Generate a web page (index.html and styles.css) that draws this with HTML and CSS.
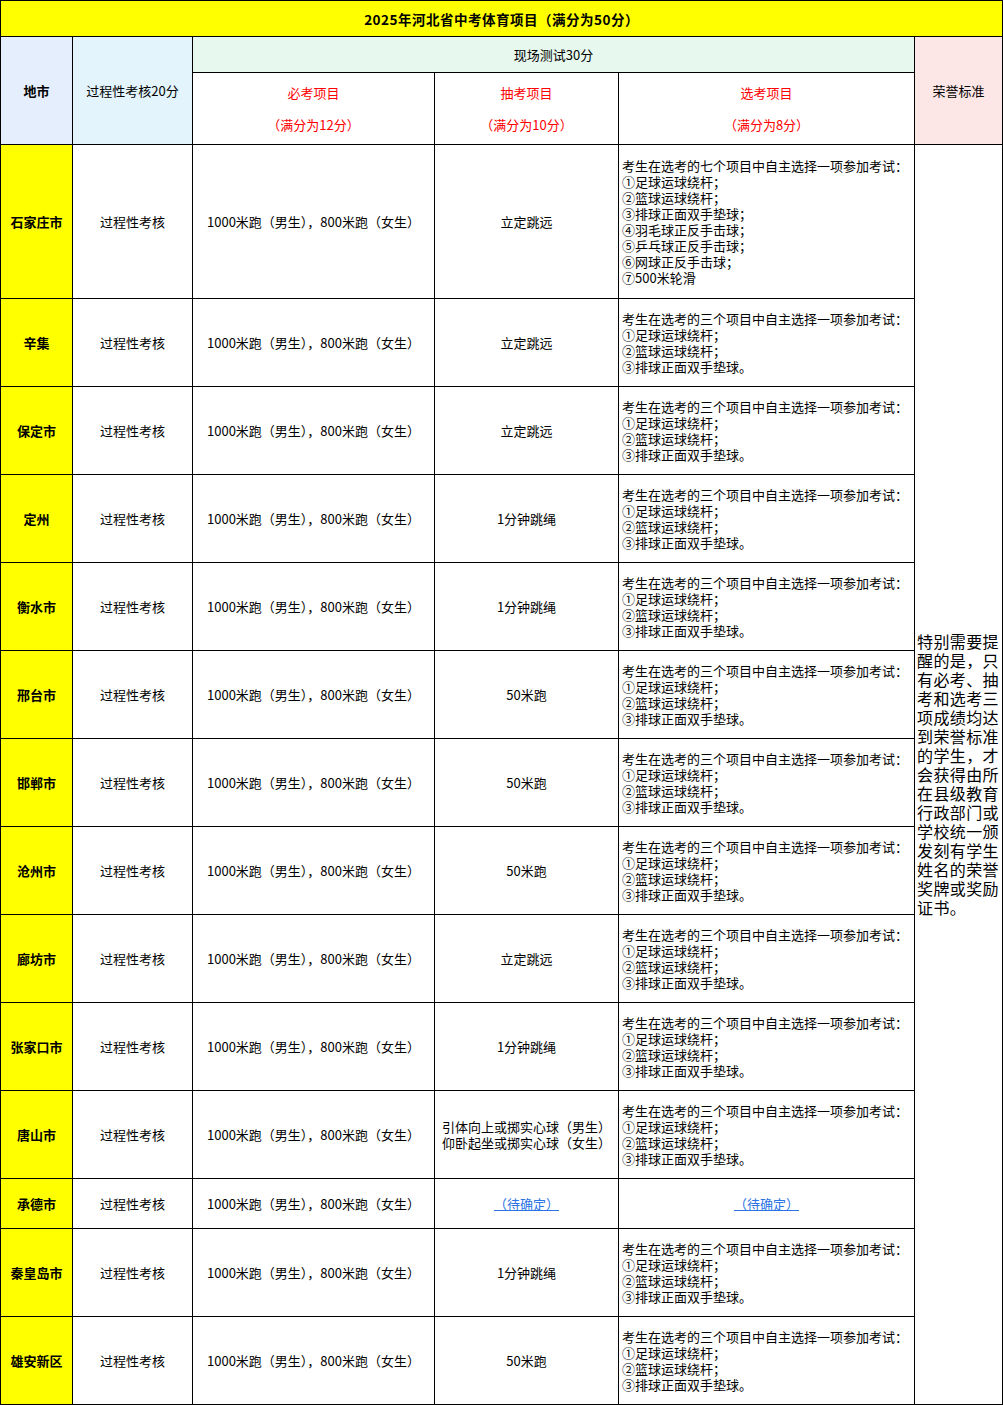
FILE: index.html
```html
<!DOCTYPE html>
<html lang="zh-CN">
<head>
<meta charset="utf-8">
<title>2025年河北省中考体育项目</title>
<link rel="stylesheet" href="styles.css">
</head>
<body>
<table class="sheet">
  <colgroup>
    <col class="c-city"><col class="c-proc"><col class="c-must"><col class="c-draw"><col class="c-opt"><col class="c-honor">
  </colgroup>
  <tr class="r-title">
    <td colspan="6" class="title">2025年河北省中考体育项目（满分为50分）</td>
  </tr>
  <tr class="r-h1">
    <td rowspan="2" class="h-city">地市</td>
    <td rowspan="2" class="h-proc">过程性考核20分</td>
    <td colspan="3" class="h-field">现场测试30分</td>
    <td rowspan="2" class="h-honor">荣誉标准</td>
  </tr>
  <tr class="r-h2">
    <td class="h-red"><div class="ln">必考项目</div><div class="ln gap">（满分为12分）</div></td>
    <td class="h-red"><div class="ln">抽考项目</div><div class="ln gap">（满分为10分）</div></td>
    <td class="h-red"><div class="ln">选考项目</div><div class="ln gap">（满分为8分）</div></td>
  </tr>
  <tr class="r-big">
    <td class="city">石家庄市</td>
    <td>过程性考核</td>
    <td>1000米跑（男生），800米跑（女生）</td>
    <td>立定跳远</td>
    <td class="opt">
      <div class="ln">考生在选考的七个项目中自主选择一项参加考试：</div>
      <div class="ln">①足球运球绕杆；</div>
      <div class="ln">②篮球运球绕杆；</div>
      <div class="ln">③排球正面双手垫球；</div>
      <div class="ln">④羽毛球正反手击球；</div>
      <div class="ln">⑤乒乓球正反手击球；</div>
      <div class="ln">⑥网球正反手击球；</div>
      <div class="ln">⑦500米轮滑</div>
    </td>
    <td rowspan="14" class="honor">特别需要提醒的是，只有必考、抽考和选考三项成绩均达到荣誉标准的学生，才会获得由所在县级教育行政部门或学校统一颁发刻有学生姓名的荣誉奖牌或奖励证书。</td>
  </tr>
  <tr class="r-std">
    <td class="city">辛集</td>
    <td>过程性考核</td>
    <td>1000米跑（男生），800米跑（女生）</td>
    <td>立定跳远</td>
    <td class="opt"><div class="ln">考生在选考的三个项目中自主选择一项参加考试：</div><div class="ln">①足球运球绕杆；</div><div class="ln">②篮球运球绕杆；</div><div class="ln">③排球正面双手垫球。</div></td>
  </tr>
  <tr class="r-std">
    <td class="city">保定市</td>
    <td>过程性考核</td>
    <td>1000米跑（男生），800米跑（女生）</td>
    <td>立定跳远</td>
    <td class="opt"><div class="ln">考生在选考的三个项目中自主选择一项参加考试：</div><div class="ln">①足球运球绕杆；</div><div class="ln">②篮球运球绕杆；</div><div class="ln">③排球正面双手垫球。</div></td>
  </tr>
  <tr class="r-std">
    <td class="city">定州</td>
    <td>过程性考核</td>
    <td>1000米跑（男生），800米跑（女生）</td>
    <td>1分钟跳绳</td>
    <td class="opt"><div class="ln">考生在选考的三个项目中自主选择一项参加考试：</div><div class="ln">①足球运球绕杆；</div><div class="ln">②篮球运球绕杆；</div><div class="ln">③排球正面双手垫球。</div></td>
  </tr>
  <tr class="r-std">
    <td class="city">衡水市</td>
    <td>过程性考核</td>
    <td>1000米跑（男生），800米跑（女生）</td>
    <td>1分钟跳绳</td>
    <td class="opt"><div class="ln">考生在选考的三个项目中自主选择一项参加考试：</div><div class="ln">①足球运球绕杆；</div><div class="ln">②篮球运球绕杆；</div><div class="ln">③排球正面双手垫球。</div></td>
  </tr>
  <tr class="r-std">
    <td class="city">邢台市</td>
    <td>过程性考核</td>
    <td>1000米跑（男生），800米跑（女生）</td>
    <td>50米跑</td>
    <td class="opt"><div class="ln">考生在选考的三个项目中自主选择一项参加考试：</div><div class="ln">①足球运球绕杆；</div><div class="ln">②篮球运球绕杆；</div><div class="ln">③排球正面双手垫球。</div></td>
  </tr>
  <tr class="r-std">
    <td class="city">邯郸市</td>
    <td>过程性考核</td>
    <td>1000米跑（男生），800米跑（女生）</td>
    <td>50米跑</td>
    <td class="opt"><div class="ln">考生在选考的三个项目中自主选择一项参加考试：</div><div class="ln">①足球运球绕杆；</div><div class="ln">②篮球运球绕杆；</div><div class="ln">③排球正面双手垫球。</div></td>
  </tr>
  <tr class="r-std">
    <td class="city">沧州市</td>
    <td>过程性考核</td>
    <td>1000米跑（男生），800米跑（女生）</td>
    <td>50米跑</td>
    <td class="opt"><div class="ln">考生在选考的三个项目中自主选择一项参加考试：</div><div class="ln">①足球运球绕杆；</div><div class="ln">②篮球运球绕杆；</div><div class="ln">③排球正面双手垫球。</div></td>
  </tr>
  <tr class="r-std">
    <td class="city">廊坊市</td>
    <td>过程性考核</td>
    <td>1000米跑（男生），800米跑（女生）</td>
    <td>立定跳远</td>
    <td class="opt"><div class="ln">考生在选考的三个项目中自主选择一项参加考试：</div><div class="ln">①足球运球绕杆；</div><div class="ln">②篮球运球绕杆；</div><div class="ln">③排球正面双手垫球。</div></td>
  </tr>
  <tr class="r-std">
    <td class="city">张家口市</td>
    <td>过程性考核</td>
    <td>1000米跑（男生），800米跑（女生）</td>
    <td>1分钟跳绳</td>
    <td class="opt"><div class="ln">考生在选考的三个项目中自主选择一项参加考试：</div><div class="ln">①足球运球绕杆；</div><div class="ln">②篮球运球绕杆；</div><div class="ln">③排球正面双手垫球。</div></td>
  </tr>
  <tr class="r-std">
    <td class="city">唐山市</td>
    <td>过程性考核</td>
    <td>1000米跑（男生），800米跑（女生）</td>
    <td><div class="ln">引体向上或掷实心球（男生）</div><div class="ln">仰卧起坐或掷实心球（女生）</div></td>
    <td class="opt"><div class="ln">考生在选考的三个项目中自主选择一项参加考试：</div><div class="ln">①足球运球绕杆；</div><div class="ln">②篮球运球绕杆；</div><div class="ln">③排球正面双手垫球。</div></td>
  </tr>
  <tr class="r-small">
    <td class="city">承德市</td>
    <td>过程性考核</td>
    <td>1000米跑（男生），800米跑（女生）</td>
    <td><a class="tbd" href="#">（待确定）</a></td>
    <td><a class="tbd" href="#">（待确定）</a></td>
  </tr>
  <tr class="r-std">
    <td class="city">秦皇岛市</td>
    <td>过程性考核</td>
    <td>1000米跑（男生），800米跑（女生）</td>
    <td>1分钟跳绳</td>
    <td class="opt"><div class="ln">考生在选考的三个项目中自主选择一项参加考试：</div><div class="ln">①足球运球绕杆；</div><div class="ln">②篮球运球绕杆；</div><div class="ln">③排球正面双手垫球。</div></td>
  </tr>
  <tr class="r-std">
    <td class="city">雄安新区</td>
    <td>过程性考核</td>
    <td>1000米跑（男生），800米跑（女生）</td>
    <td>50米跑</td>
    <td class="opt"><div class="ln">考生在选考的三个项目中自主选择一项参加考试：</div><div class="ln">①足球运球绕杆；</div><div class="ln">②篮球运球绕杆；</div><div class="ln">③排球正面双手垫球。</div></td>
  </tr>
</table>
</body>
</html>
```
FILE: styles.css
```css
html, body {
  margin: 0;
  padding: 0;
  background: #ffffff;
}
body {
  font-family: "Noto Sans CJK SC", "Noto Sans", sans-serif;
  font-size: 13px;
  color: #000;
}
.sheet {
  border-collapse: collapse;
  table-layout: fixed;
  width: 1002px;
}
.sheet td {
  border: 1px solid #000;
  padding: 0;
  text-align: center;
  vertical-align: middle;
  line-height: 16px;
  white-space: nowrap;
  overflow: hidden;
}
.ln {
  height: 16px;
  line-height: 16px;
  white-space: nowrap;
}
.ln.gap {
  margin-top: 16px;
}
.c-city { width: 72px; }
.c-proc { width: 120px; }
.c-must { width: 242px; }
.c-draw { width: 184px; }
.c-opt { width: 296px; }
.c-honor { width: 88px; }

.r-title { height: 36px; }
.r-h1 { height: 36px; }
.r-h2 { height: 72px; }
.r-big { height: 154px; }
.r-std { height: 88px; }
.r-small { height: 50px; }

.sheet td.title {
  background: #ffff00;
  font-weight: bold;
  font-size: 13.5px;
  letter-spacing: 0.5px;
}
.sheet td.h-city {
  background: #e5eefd;
  font-weight: bold;
}
.sheet td.h-proc {
  background: #e3f4fc;
}
.sheet td.h-field {
  background: #e7f8ee;
}
.sheet td.h-honor {
  background: #fde6e6;
}
.sheet td.h-red {
  color: #ff0000;
}
.sheet td.city {
  background: #ffff00;
  font-weight: bold;
}
.sheet td.opt {
  text-align: left;
  padding-left: 3px;
}
.sheet td.honor {
  white-space: normal;
  text-align: left;
  font-size: 16px;
  line-height: 19px;
  letter-spacing: 0.4px;
  padding: 0 1px 0 2px;
  word-break: break-all;
}
.tbd {
  color: #2a74e6;
  text-decoration: underline;
}
```
